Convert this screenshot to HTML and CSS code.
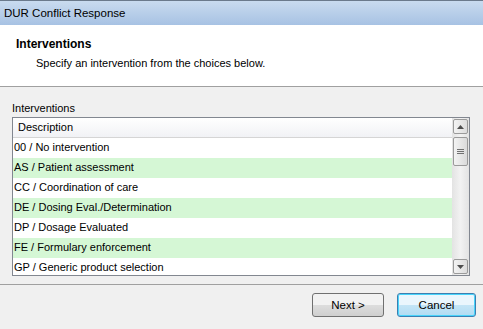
FILE: index.html
```html
<!DOCTYPE html>
<html lang="en">
<head>
  <meta charset="UTF-8">
  <title>DUR Conflict Response</title>
  <link rel="stylesheet" href="styles.css">
</head>
<body>
  <div class="titlebar">DUR Conflict Response</div>

  <div class="header">
    <div class="header-title">Interventions</div>
    <div class="header-sub">Specify an intervention from the choices below.</div>
  </div>

  <div class="content">
    <div class="group-label">Interventions</div>
    <div class="listbox">
      <div class="grid">
        <div class="grid-head">Description</div>
        <div class="row">00 / No intervention</div>
        <div class="row alt">AS / Patient assessment</div>
        <div class="row">CC / Coordination of care</div>
        <div class="row alt">DE / Dosing Eval./Determination</div>
        <div class="row">DP / Dosage Evaluated</div>
        <div class="row alt">FE / Formulary enforcement</div>
        <div class="row">GP / Generic product selection</div>
      </div>
      <div class="scrollbar">
        <div class="sb-btn">
          <svg width="7" height="4" viewBox="0 0 7 4"><path d="M0 4 L3.5 0 L7 4 Z" fill="#4d4d4d"/></svg>
        </div>
        <div class="sb-thumb">
          <span></span><span></span><span></span>
        </div>
        <div class="sb-track"></div>
        <div class="sb-btn">
          <svg width="7" height="4" viewBox="0 0 7 4"><path d="M0 0 L3.5 4 L7 0 Z" fill="#4d4d4d"/></svg>
        </div>
      </div>
    </div>
  </div>

  <div class="footer">
    <button class="button">Next &gt;</button>
    <button class="button default">Cancel</button>
  </div>
</body>
</html>
```

FILE: styles.css
```css
body { margin: 0; width: 483px; height: 329px; overflow: hidden; background-color: #f0f0f0; font-family: "Liberation Sans", Arial, sans-serif; font-size: 11px; color: #000; }

.titlebar { height: 24px; line-height: 24px; padding-left: 4px; border-top: 1px solid #6b7a8c; background: linear-gradient(#c9dbef, #a7c2e3); font-size: 11.5px; }

.header { height: 61px; background-color: #fff; border-bottom: 1px solid #a0a0a0; padding-left: 16px; }
.header-title { font-weight: bold; font-size: 12px; padding-top: 10px; line-height: 18px; }
.header-sub { padding-left: 20px; line-height: 18px; margin-top: 1px; font-size: 11px; }

.content { padding: 13px 0 0 12px; height: 198px; box-sizing: border-box; border-bottom: 1px solid #a0a0a0; }
.group-label { line-height: 16px; margin-bottom: 1px; }

.listbox { display: flex; width: 458px; height: 159px; border: 1px solid #828790; box-sizing: border-box; background-color: #fff; overflow: hidden; }
.grid { width: 439px; }
.grid-head { height: 20px; line-height: 19px; padding-left: 5px; box-sizing: border-box; border-bottom: 1px solid #d5d5d5; background: linear-gradient(#ffffff, #f1f2f5); }
.row { height: 20px; line-height: 19px; padding-left: 1px; }
.row.alt { background-color: #d5f7d5; }

.scrollbar { width: 17px; display: flex; flex-direction: column; padding: 1px 0; background: linear-gradient(90deg, #e3e3e3, #f2f2f2 50%, #e3e3e3); }
.sb-btn { height: 15px; margin: 0 1px; border: 1px solid #9a9a9a; border-radius: 2px; box-sizing: border-box; background: linear-gradient(90deg, #f3f3f3, #dcdcdc); display: flex; align-items: center; justify-content: center; }
.sb-thumb { height: 29px; margin: 3px 1px 0; border: 1px solid #9a9a9a; border-radius: 2px; box-sizing: border-box; background: linear-gradient(90deg, #f3f3f3, #dadada); display: flex; flex-direction: column; align-items: center; justify-content: center; gap: 1px; }
.sb-thumb span { width: 7px; height: 1px; background-color: #707070; }
.sb-track { flex: 1; }

.footer { display: flex; justify-content: flex-end; gap: 13px; padding: 8px 7px 0 0; }
.button { font-family: inherit; font-size: 11.5px; height: 24px; padding: 0; border: 1px solid #707070; border-radius: 3px; background: linear-gradient(#f2f2f2 50%, #dddddd 50%, #cfcfcf); color: #000; }
.button:first-child { width: 72px; }
.default { width: 79px; border-color: #3c7fb1; box-shadow: inset 0 0 0 1px #48d4fb; background: linear-gradient(#eaf6fd 50%, #c4e5f6 50%, #b1dcf3); }
```
